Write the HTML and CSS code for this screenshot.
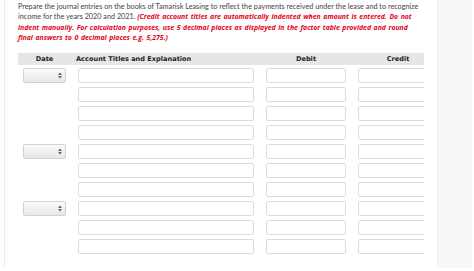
FILE: index.html
```html
<!DOCTYPE html>
<html lang="en">
<head>
    <meta charset="UTF-8">
    <meta name="viewport" content="width=device-width, initial-scale=1.0">
    <title>Journal Entries</title>
    <link rel="stylesheet" href="styles.css">
</head>
<body>

<div id="page">
    <!-- Question and entry table -->
    <div id="main">
        <p class="question">
            Prepare the journal entries on the books of Tamarisk Leasing to reflect the payments received under the lease and to recognize income for the years 2020 and 2021.
            <em class="note">(Credit account titles are automatically indented when amount is entered. Do not indent manually. For calculation purposes, use 5 decimal places as displayed in the factor table provided and round final answers to 0 decimal places e.g. 5,275.)</em>
        </p>

        <div id="journal">
            <div class="head">
                <span class="h-date">Date</span>
                <span class="h-account">Account Titles and Explanation</span>
                <span class="h-amount">Debit</span>
                <span class="h-amount">Credit</span>
            </div>

            <div class="row">
                <div class="date-select"><svg width="4" height="7" viewBox="0 0 4 7"><path d="M0 3 L2 0.5 L4 3 Z M0 4 L2 6.5 L4 4 Z" fill="#666"/></svg></div>
                <div class="field"></div><div class="field"></div><div class="field"></div>
            </div>
            <div class="row">
                <div></div><div class="field"></div><div class="field"></div><div class="field"></div>
            </div>
            <div class="row">
                <div></div><div class="field"></div><div class="field"></div><div class="field"></div>
            </div>
            <div class="row">
                <div></div><div class="field"></div><div class="field"></div><div class="field"></div>
            </div>
            <div class="row">
                <div class="date-select"><svg width="4" height="7" viewBox="0 0 4 7"><path d="M0 3 L2 0.5 L4 3 Z M0 4 L2 6.5 L4 4 Z" fill="#666"/></svg></div>
                <div class="field"></div><div class="field"></div><div class="field"></div>
            </div>
            <div class="row">
                <div></div><div class="field"></div><div class="field"></div><div class="field"></div>
            </div>
            <div class="row">
                <div></div><div class="field"></div><div class="field"></div><div class="field"></div>
            </div>
            <div class="row">
                <div class="date-select"><svg width="4" height="7" viewBox="0 0 4 7"><path d="M0 3 L2 0.5 L4 3 Z M0 4 L2 6.5 L4 4 Z" fill="#666"/></svg></div>
                <div class="field"></div><div class="field"></div><div class="field"></div>
            </div>
            <div class="row">
                <div></div><div class="field"></div><div class="field"></div><div class="field"></div>
            </div>
            <div class="row">
                <div></div><div class="field"></div><div class="field"></div><div class="field"></div>
            </div>
        </div>
    </div>

    <!-- Side panel -->
    <div id="side"></div>
</div>

</body>
</html>
```

FILE: styles.css
```css
body {
    font-family: Lato, "Open Sans", sans-serif;
    background-color: #fff;
    color: #444;
    margin: 0;
    padding: 0;
}
#page {
    display: flex;
    height: 268px;
}
#main {
    flex: none;
    margin-left: 4px;
    border-left: 1px solid #ececec;
    width: 406px;
    padding-left: 13px;
    overflow: hidden;
}
#side {
    flex: none;
    margin-left: 13px;
    width: 34px;
    background-color: #f7f7f7;
    border-left: 1px solid #efefef;
}
.question {
    margin: 0;
    padding-top: 2px;
    font-size: 7.25px;
    line-height: 10.4px;
}
.note {
    font-family: "Open Sans", sans-serif;
    color: #e3001b;
    font-weight: bold;
    font-size: 6.9px;
    word-spacing: 0.8px;
}
#journal {
    margin-top: 9px;
    overflow: hidden;
}
.head,
.row {
    display: grid;
    grid-template-columns: 43px 176px 80px 80px;
    column-gap: 12px;
    padding-left: 5px;
}
.head {
    background-color: #e6e6e6;
    height: 12px;
    line-height: 12px;
    font-family: "DejaVu Sans", sans-serif;
    font-weight: bold;
    font-size: 6.6px;
    color: #222;
    margin-bottom: 3px;
}
.h-date,
.h-amount {
    text-align: center;
}
.h-account {
    margin-left: -2px;
}
.row {
    height: 15px;
    margin-bottom: 4px;
}
.field {
    border: 1px solid #dcdcdc;
    border-radius: 2px;
    background-color: #fff;
}
.date-select {
    border: 1px solid #d2d2d2;
    border-radius: 2px;
    background: linear-gradient(#fbfbfb, #e6e6e6);
    display: flex;
    align-items: center;
    justify-content: flex-end;
    padding-right: 3px;
}
```
